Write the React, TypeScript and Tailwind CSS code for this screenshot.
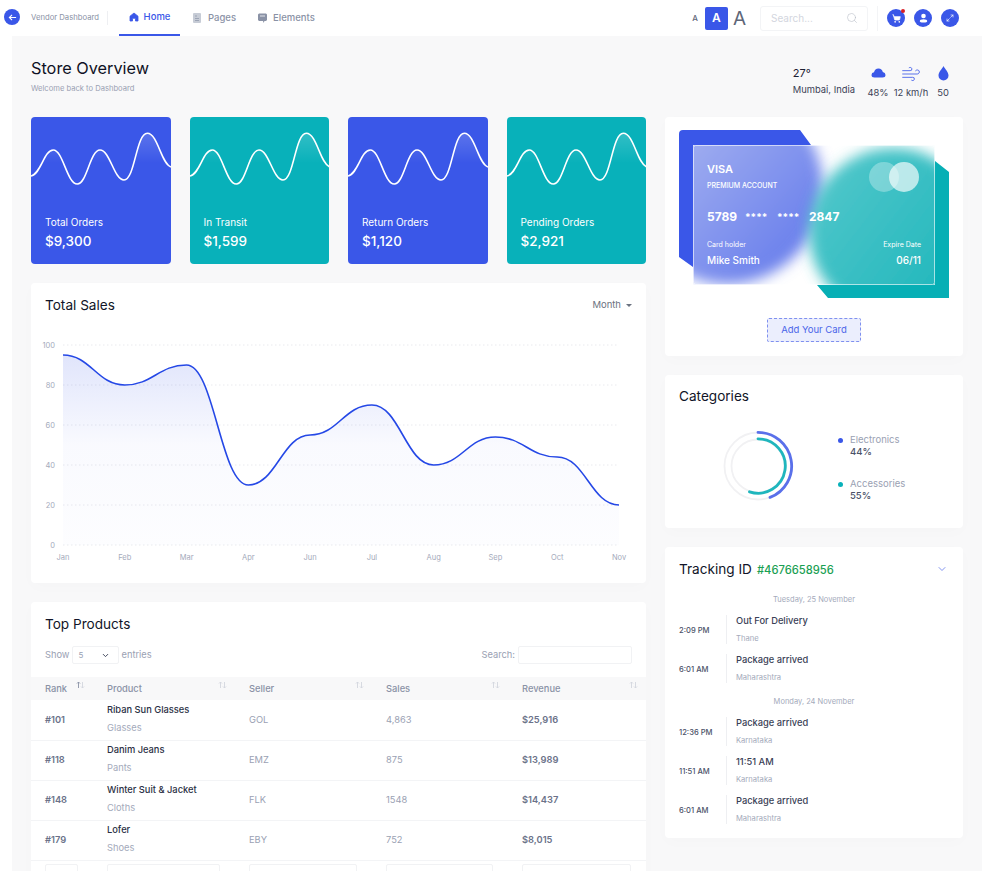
import { Maximize2, Search, ShoppingCart, Wind, ChevronDown } from "lucide-react";

const font = { fontFamily: "Inter, 'Noto Sans', sans-serif" };

const chartData = [95, 80, 90, 30, 55, 70, 40, 54, 44, 20];
const chartLabels = ["Jan", "Feb", "Mar", "Apr", "Jun", "Jul", "Aug", "Sep", "Oct", "Nov"];

const chartX = (i: number) => 32 + i * 61.78;
const chartY = (v: number) => 210 - v * 2;

const linePath = () => {
  let d = `M${chartX(0)} ${chartY(chartData[0])}`;
  for (let i = 1; i < chartData.length; i++) {
    const x0 = chartX(i - 1);
    const x1 = chartX(i);
    const k = (x1 - x0) * 0.45;
    d += ` C${x0 + k} ${chartY(chartData[i - 1])} ${x1 - k} ${chartY(chartData[i])} ${x1} ${chartY(chartData[i])}`;
  }
  return d;
};

const Spark = ({ id }: { id: string }) => {
  const line =
    "M0 59 C10 57 13 33 22.3 33 C32 33 36 67 46.3 67 C56 67 59 33 69 33 C79 33 83 63 93 63 C104 63 105 16.3 116.3 16.3 C127 16.3 130 47 140 50";
  return (
    <svg width="140" height="80" viewBox="0 0 140 80" className="block">
      <defs>
        <linearGradient id={id} x1="0" y1="16" x2="0" y2="46" gradientUnits="userSpaceOnUse">
          <stop offset="0" stopColor="#fff" stopOpacity="0.17" />
          <stop offset="1" stopColor="#fff" stopOpacity="0" />
        </linearGradient>
      </defs>
      <path d={line + " L140 80 L0 80 Z"} fill={`url(#${id})`} />
      <path d={line} fill="none" stroke="#fff" strokeWidth="1.6" />
    </svg>
  );
};

const StatCard = ({ label, value, color, id }: { label: string; value: string; color: string; id: string }) => (
  <div className={`h-[147px] rounded-[4px] overflow-hidden text-white ${color}`}>
    <Spark id={id} />
    <div className="pl-[14px] pt-[18px]">
      <div className="text-[10px] leading-[14px]">{label}</div>
      <div className="text-[13.500px] leading-[20px] mt-[2px] font-medium">{value}</div>
    </div>
  </div>
);

const SortIcon = ({ active }: { active?: boolean }) => (
  <svg width="9" height="8" viewBox="0 0 9 8" className="absolute right-[8px] top-[4px]">
    <path d="M2.5 7V1M1 2.5 2.5 1 4 2.5" fill="none" stroke={active ? "#8a92a6" : "#d3d6de"} strokeWidth="0.9" />
    <path d="M6.5 1V7M5 5.5 6.5 7 8 5.5" fill="none" stroke="#d3d6de" strokeWidth="0.9" />
  </svg>
);

const tableRows = [
  { rank: "#101", name: "Riban Sun Glasses", type: "Glasses", seller: "GOL", sales: "4,863", revenue: "$25,916" },
  { rank: "#118", name: "Danim Jeans", type: "Pants", seller: "EMZ", sales: "875", revenue: "$13,989" },
  { rank: "#148", name: "Winter Suit & Jacket", type: "Cloths", seller: "FLK", sales: "1548", revenue: "$14,437" },
  { rank: "#179", name: "Lofer", type: "Shoes", seller: "EBY", sales: "752", revenue: "$8,015" },
];

const TrackingRow = ({ time, title, place }: { time: string; title: string; place: string }) => (
  <div className="flex h-[29px] items-center">
    <div className="w-[47px] text-[7.600px] text-[#4b5268] font-medium pt-[2px]">{time}</div>
    <div className="w-[10px] h-full border-l border-[#eeeff2]" />
    <div>
      <div className="text-[9.300px] leading-[12px] text-[#3a4156] font-medium">{title}</div>
      <div className="text-[7.600px] leading-[10px] mt-[7px] text-[#a4aabb]">{place}</div>
    </div>
  </div>
);

const CardArt = () => (
  <svg width="270" height="168" viewBox="0 0 270 168" className="absolute left-0 top-0">
    <defs>
      <filter id="soft" x="-30%" y="-30%" width="160%" height="160%">
        <feGaussianBlur stdDeviation="7" />
      </filter>
      <clipPath id="glass">
        <rect x="14" y="15" width="242" height="140" rx="2" />
      </clipPath>
      <linearGradient id="blueGlass" x1="14" y1="15" x2="120" y2="110" gradientUnits="userSpaceOnUse">
        <stop offset="0" stopColor="#9dabf0" />
        <stop offset="1" stopColor="#6d82ec" />
      </linearGradient>
      <linearGradient id="tealGlass" x1="130" y1="60" x2="260" y2="160" gradientUnits="userSpaceOnUse">
        <stop offset="0" stopColor="#4fc6ca" />
        <stop offset="1" stopColor="#24b8bd" />
      </linearGradient>
    </defs>
    <path d="M4 0H121L132 15H14V137L0 127V4Q0 0 4 0Z" fill="#3a57e8" />
    <path d="M256 31L270 42V168H149L138 155H256Z" fill="#07afb5" />
    <rect x="14" y="15" width="242" height="140" fill="#fff" />
    <g clipPath="url(#glass)">
      <circle cx="48" cy="58" r="96" fill="url(#blueGlass)" filter="url(#soft)" />
      <circle cx="214" cy="102" r="84" fill="url(#tealGlass)" filter="url(#soft)" />
    </g>
    <rect x="14.5" y="15.5" width="241" height="139" rx="2" fill="none" stroke="#fff" strokeOpacity="0.6" />
    <circle cx="205" cy="47" r="15" fill="#fff" fillOpacity="0.3" />
    <circle cx="225" cy="47" r="15" fill="#fff" fillOpacity="0.65" />
  </svg>
);

export default function App() {
  return (
    <div className="relative h-[871px] overflow-hidden bg-white text-[#8a92a6]" style={font}>
      {/* top bar */}
      <header className="h-9 flex items-center bg-white pl-[31px] pr-[23px]">
        <div className="absolute left-[4px] top-[9px] w-4 h-4 rounded-full bg-[#3a57e8] flex items-center justify-center">
          <svg width="9" height="9" viewBox="0 0 10 10" fill="none" stroke="#fff" strokeWidth="1.2">
            <path d="M9 5H1.5M4.5 2 1.5 5l3 3" />
          </svg>
        </div>
        <span className="text-[7.700px] w-[76px]">Vendor Dashboard</span>
        <div className="h-[14px] border-l border-[#eeeff2]" />
        <nav className="flex h-full ml-[11px] text-[9.500px] font-medium">
          <a className="w-[61px] h-full flex items-center justify-center gap-[5px] text-[#3a57e8] border-b-2 border-[#3a57e8]">
            <svg width="10" height="10" viewBox="0 0 10 10" fill="#3a57e8" stroke="#3a57e8" strokeLinejoin="round" strokeWidth="0.8">
              <path d="M1 4.2 5 1l4 3.200V9H6.500V6.300h-3V9H1Z" />
            </svg>
            Home
          </a>
          <a className="flex items-center gap-[6px] ml-[13px]">
            <svg width="9" height="10" viewBox="0 0 9 10">
              <rect width="8" height="10" rx="1" fill="#c7ccd6" />
              <path d="M2 3h2M2 5.500h4M2 7.500h4" stroke="#8a92a6" strokeWidth="0.7" />
            </svg>
            Pages
          </a>
          <a className="flex items-center gap-[6px] ml-[22px]">
            <svg width="9" height="10" viewBox="0 0 9 10">
              <path d="M0 1.500 1 .500h7l1 1V7L8 8H6.500L5.500 10 5 8H1L0 7Z" fill="#8a92a6" />
              <path d="M2 3h5" stroke="#e2e4ea" strokeWidth="1" />
            </svg>
            Elements
          </a>
        </nav>
        <div className="ml-auto flex items-center">
          <span className="text-[8px] text-[#5e6678] font-medium mr-[7px]">A</span>
          <span className="w-[23px] h-[23px] rounded-[2px] bg-[#3a57e8] text-white text-[12px] font-semibold flex items-center justify-center">
            A
          </span>
          <span className="text-[19px] leading-none text-[#5e6678] ml-[5px] mr-[14px]">A</span>
          <div className="w-[108px] h-[25px] border border-[#f3f4f6] rounded-[3px] flex items-center justify-between pl-[10px] pr-[9px]">
            <span className="text-[10px] text-[#d3d6de]">Search...</span>
            <Search size={12} strokeWidth={1.2} color="#b9bdc7" />
          </div>
          <div className="h-[25px] border-l border-[#f3f4f6] ml-[9px] mr-[9px]" />
          <div className="flex gap-[9px]">
            <div className="relative w-[18px] h-[18px] rounded-full bg-[#3a57e8] flex items-center justify-center">
              <ShoppingCart size={9} color="#fff" fill="#fff" />
              <span className="absolute right-[0px] top-[0px] w-[4px] h-[4px] rounded-full bg-[#d81f26]" />
            </div>
            <div className="w-[18px] h-[18px] rounded-full bg-[#3a57e8] flex items-center justify-center">
              <svg width="9" height="10" viewBox="0 0 9 10" fill="#fff">
                <circle cx="4.500" cy="3" r="2.300" />
                <path d="M.8 8.200Q.8 6.300 4.500 6.300T8.200 8.200Q8.200 9.500 4.500 9.500T.8 8.200Z" />
              </svg>
            </div>
            <div className="w-[18px] h-[18px] rounded-full bg-[#3a57e8] flex items-center justify-center">
              <Maximize2 size={8} color="#fff" strokeWidth={2} />
            </div>
          </div>
        </div>
      </header>

      <div className="flex">
        <div className="w-3 shrink-0 bg-white" />
        <main className="flex-1 bg-[#f8f8f9] px-[19px] pb-10">
          {/* heading + weather */}
          <div className="h-[81px] flex justify-between">
            <div className="pt-[20px]">
              <h1 className="text-[16.300px] leading-[24px] text-[#0f1225]">Store Overview</h1>
              <p className="text-[7.600px] leading-[10px] mt-[4px] text-[#9aa1b3]">Welcome back to Dashboard</p>
            </div>
            <div className="flex items-start pt-[30px] pr-[13px] text-[#3a4156]">
              <div className="mr-[12px]">
                <div className="text-[11px] leading-[14px] text-[#1c2033]">27°</div>
                <div className="text-[9.400px] leading-[12px] mt-[4px]">Mumbai, India</div>
              </div>
              <div className="flex flex-col items-center w-[22px] mr-[4px]">
                <svg width="15" height="11" viewBox="0 0 15 11" fill="#3a57e8" className="h-[14px]">
                  <path d="M3.500 10Q.5 10 .5 7.500 .5 5 3 4.800 3.800 1 7.500 1 11 1 11.800 4.500 14.500 5 14.500 7.500T11.500 10Z" />
                </svg>
                <span className="text-[9.400px] leading-[12px] mt-[7px] whitespace-nowrap">48%</span>
              </div>
              <div className="flex flex-col items-center w-[36px] mt-[-2px] mr-[7px]">
                <Wind size={20} color="#3a57e8" strokeWidth={1} />
                <span className="text-[9.400px] leading-[12px] mt-[3px] whitespace-nowrap">12 km/h</span>
              </div>
              <div className="flex flex-col items-center w-[14px]">
                <svg width="11" height="15" viewBox="0 0 11 15" fill="#3a57e8">
                  <path d="M5.500 0C7 3 10.500 6 10.500 9.500A5 5 0 0 1 .5 9.500C.5 6 4 3 5.500 0Z" />
                </svg>
                <span className="text-[9.400px] leading-[12px] mt-[6px]">50</span>
              </div>
            </div>
          </div>

          <div className="flex gap-[19px] items-start">
            {/* left column */}
            <div className="w-[615px] shrink-0 flex flex-col gap-[19px]">
              <div className="grid grid-cols-4 gap-[19px]">
                <StatCard id="s1" label="Total Orders" value="$9,300" color="bg-[#3a57e8]" />
                <StatCard id="s2" label="In Transit" value="$1,599" color="bg-[#08b1ba]" />
                <StatCard id="s3" label="Return Orders" value="$1,120" color="bg-[#3a57e8]" />
                <StatCard id="s4" label="Pending Orders" value="$2,921" color="bg-[#08b1ba]" />
              </div>

              {/* total sales */}
              <section className="h-[300px] bg-white rounded-[4px] shadow-[0_4px_16px_rgba(0,0,0,0.015)]">
                <div className="flex justify-between items-center px-[14px] pt-[4px] h-[40px]">
                  <h2 className="text-[13.600px] text-[#111528]">Total Sales</h2>
                  <span className="flex items-center gap-[5px] text-[9.500px] text-[#6b7280]">
                    Month
                    <span className="w-0 h-0 border-x-[3px] border-x-transparent border-t-[3px] border-t-[#6b7280]" />
                  </span>
                </div>
                <svg width="615" height="250" viewBox="0 0 615 250" className="block mt-[12px]">
                  <defs>
                    <linearGradient id="area" x1="0" y1="10" x2="0" y2="210" gradientUnits="userSpaceOnUse">
                      <stop offset="0" stopColor="#3a57e8" stopOpacity="0.17" />
                      <stop offset="0.5" stopColor="#3a57e8" stopOpacity="0.03" />
                      <stop offset="1" stopColor="#3a57e8" stopOpacity="0.012" />
                    </linearGradient>
                  </defs>
                  {[100, 80, 60, 40, 20, 0].map((v) => (
                    <g key={v}>
                      <line x1="32" x2="588" y1={chartY(v)} y2={chartY(v)} stroke="#e9eaee" strokeDasharray="1.500 2.500" />
                      <text x="24" y={chartY(v) + 2.500} textAnchor="end" fontSize="7.500" fill="#a4aabb">
                        {v}
                      </text>
                    </g>
                  ))}
                  <path d={`${linePath()} L${chartX(9)} 210 L${chartX(0)} 210 Z`} fill="url(#area)" />
                  <path d={linePath()} fill="none" stroke="#2548e6" strokeWidth="1.600" />
                  {chartLabels.map((l, i) => (
                    <text key={l} x={chartX(i)} y="225" textAnchor="middle" fontSize="7.500" fill="#a4aabb">
                      {l}
                    </text>
                  ))}
                </svg>
              </section>

              {/* top products */}
              <section className="bg-white rounded-[4px] shadow-[0_4px_16px_rgba(0,0,0,0.015)]">
                <h2 className="text-[13.600px] leading-[20px] text-[#111528] pl-[14px] pt-[12px]">Top Products</h2>
                <div className="flex justify-between items-center px-[14px] mt-[12px] text-[9.300px] text-[#9aa1b3]">
                  <div className="flex items-center">
                    Show
                    <div className="w-[47px] h-[18px] ml-[3px] mr-[2px] border border-[#f1f2f4] rounded-[2px] flex items-center justify-between pl-[5px] pr-[8px] text-[8px]">
                      5
                      <ChevronDown size={9} color="#3a4156" strokeWidth={2.500} />
                    </div>
                    entries
                  </div>
                  <div className="flex items-center">
                    Search:
                    <div className="w-[114px] h-[18px] ml-[3px] border border-[#f1f2f4] rounded-[2px]" />
                  </div>
                </div>
                <table className="w-full table-fixed mt-[13px] text-[9.300px]">
                  <colgroup>
                    <col className="w-[62px]" />
                    <col className="w-[142px]" />
                    <col className="w-[137px]" />
                    <col className="w-[136px]" />
                    <col className="w-[138px]" />
                  </colgroup>
                  <thead>
                    <tr className="h-[23px] bg-[#f8f8f9] text-left text-[#8a92a6]">
                      {["Rank", "Product", "Seller", "Sales", "Revenue"].map((h, i) => (
                        <th key={h} className="relative pl-[14px] font-medium">
                          {h}
                          <SortIcon active={i === 0} />
                        </th>
                      ))}
                    </tr>
                  </thead>
                  <tbody>
                    {tableRows.map((r) => (
                      <tr key={r.rank} className="h-[40px] border-b border-[#f3f4f6] last:border-b-0">
                        <td className="pl-[14px] font-semibold text-[#6b7289]">{r.rank}</td>
                        <td className="pl-[14px] pb-[2px]">
                          <div className="text-[#2b3044] font-medium leading-[12px]">{r.name}</div>
                          <div className="text-[#a4aabb] leading-[12px] mt-[6px]">{r.type}</div>
                        </td>
                        <td className="pl-[14px] text-[#9aa1b3]">{r.seller}</td>
                        <td className="pl-[14px] text-[#9aa1b3]">{r.sales}</td>
                        <td className="pl-[14px] font-semibold text-[#6b7289]">{r.revenue}</td>
                      </tr>
                    ))}
                    <tr>
                      <td className="pl-[14px] pr-[15px] pt-[3px]">
                        <input placeholder="Rank" className="w-full h-[20px] px-[5px] border border-[#f1f2f4] rounded-[2px] text-[8px]" />
                      </td>
                      <td className="pl-[14px] pr-[15px] pt-[3px]">
                        <input placeholder="Product" className="w-full h-[20px] px-[5px] border border-[#f1f2f4] rounded-[2px] text-[8px]" />
                      </td>
                      <td className="pl-[14px] pr-[15px] pt-[3px]">
                        <input placeholder="Seller" className="w-full h-[20px] px-[5px] border border-[#f1f2f4] rounded-[2px] text-[8px]" />
                      </td>
                      <td className="pl-[14px] pr-[15px] pt-[3px]">
                        <input placeholder="Sales" className="w-full h-[20px] px-[5px] border border-[#f1f2f4] rounded-[2px] text-[8px]" />
                      </td>
                      <td className="pl-[14px] pr-[15px] pt-[3px]">
                        <input placeholder="Revenue" className="w-full h-[20px] px-[5px] border border-[#f1f2f4] rounded-[2px] text-[8px]" />
                      </td>
                    </tr>
                  </tbody>
                </table>
              </section>
            </div>

            {/* right column */}
            <div className="w-[298px] shrink-0 flex flex-col gap-[19px]">
              <section className="h-[239px] bg-white rounded-[4px] pt-[13px] pl-[14px] shadow-[0_4px_16px_rgba(0,0,0,0.015)]">
                <div className="relative w-[270px] h-[168px] text-white">
                  <CardArt />
                  <div className="absolute left-[28px] right-[28px] top-[32px]">
                    <div className="text-[11px] leading-[14px] font-semibold">VISA</div>
                    <div className="text-[7px] leading-[10px] mt-[5px] font-medium">PREMIUM ACCOUNT</div>
                    <div className="flex items-center text-[12px] leading-[16px] font-bold mt-[18px]">
                      <span className="w-[29px]">5789</span>
                      <span className="ml-[9px] w-[23px] text-[10px]">****</span>
                      <span className="ml-[9px] w-[23px] text-[10px]">****</span>
                      <span className="ml-[9px]">2847</span>
                    </div>
                    <div className="flex justify-between mt-[15px]">
                      <div>
                        <div className="text-[7px] leading-[10px]">Card holder</div>
                        <div className="text-[10px] leading-[14px] mt-[3px] font-medium">Mike Smith</div>
                      </div>
                      <div className="text-right">
                        <div className="text-[7px] leading-[10px]">Expire Date</div>
                        <div className="text-[10px] leading-[14px] mt-[3px] font-medium">06/11</div>
                      </div>
                    </div>
                  </div>
                </div>
                <div className="w-[94px] h-[24px] mt-[20px] ml-[88px] border border-dashed border-[#7f90ef] rounded-[2px] bg-[#ebeefd] text-[#4a65e9] text-[9.500px] flex items-center justify-center">
                  Add Your Card
                </div>
              </section>

              <section className="h-[153px] bg-white rounded-[4px] shadow-[0_4px_16px_rgba(0,0,0,0.015)]">
                <h2 className="text-[13.600px] leading-[20px] text-[#111528] pl-[14px] pt-[11px]">Categories</h2>
                <div className="flex mt-[23px] pl-[56px]">
                  <svg width="74" height="74" viewBox="0 0 74 74" className="shrink-0">
                    <circle cx="37" cy="37" r="33.500" fill="none" stroke="#f1f1f3" strokeWidth="1.800" />
                    <circle cx="37" cy="37" r="26.500" fill="none" stroke="#f1f1f3" strokeWidth="1.800" />
                    <path d="M37 3.400A33.600 33.600 0 0 1 49 68.400" fill="none" stroke="#5a70ea" strokeWidth="2.800" strokeLinecap="round" />
                    <path d="M37 9.800A27.200 27.200 0 1 1 28.500 62.800" fill="none" stroke="#1fb6bd" strokeWidth="2.800" strokeLinecap="round" />
                  </svg>
                  <div className="ml-[43px] mt-[5px]">
                    {[
                      { name: "Electronics", pct: "44%", dot: "bg-[#3a57e8]" },
                      { name: "Accessories", pct: "55%", dot: "bg-[#08b1ba]" },
                    ].map((c) => (
                      <div key={c.name} className="flex items-center mb-[20px]">
                        <span className={`w-[5px] h-[5px] rounded-full mr-[7px] mt-[-11px] ${c.dot}`} />
                        <div>
                          <div className="text-[9.500px] leading-[12px] text-[#9aa1b3]">{c.name}</div>
                          <div className="text-[9.500px] leading-[12px] text-[#4b5268] font-medium">{c.pct}</div>
                        </div>
                      </div>
                    ))}
                  </div>
                </div>
              </section>

              <section className="h-[291px] bg-white rounded-[4px] px-[14px] pt-[12px] shadow-[0_4px_16px_rgba(0,0,0,0.015)]">
                <div className="flex items-baseline h-[20px]">
                  <h2 className="text-[13.600px] text-[#111528]">Tracking ID</h2>
                  <span className="ml-[5px] text-[11.200px] font-medium text-[#1aa053]">#4676658956</span>
                  <ChevronDown size={12} color="#5a70ea" strokeWidth={1.500} className="ml-auto mr-[1px] self-center" />
                </div>
                <div className="text-center text-[7.500px] leading-[10px] text-[#a4aabb] mt-[16px] mb-[10px]">Tuesday, 25 November</div>
                <div className="flex flex-col gap-[10px]">
                  <TrackingRow time="2:09 PM" title="Out For Delivery" place="Thane" />
                  <TrackingRow time="6:01 AM" title="Package arrived" place="Maharashtra" />
                </div>
                <div className="text-center text-[7.500px] leading-[10px] text-[#a4aabb] mt-[14px] mb-[10px]">Monday, 24 November</div>
                <div className="flex flex-col gap-[10px]">
                  <TrackingRow time="12:36 PM" title="Package arrived" place="Karnataka" />
                  <TrackingRow time="11:51 AM" title="11:51 AM" place="Karnataka" />
                  <TrackingRow time="6:01 AM" title="Package arrived" place="Maharashtra" />
                </div>
              </section>
            </div>
          </div>
        </main>
      </div>
    </div>
  );
}
